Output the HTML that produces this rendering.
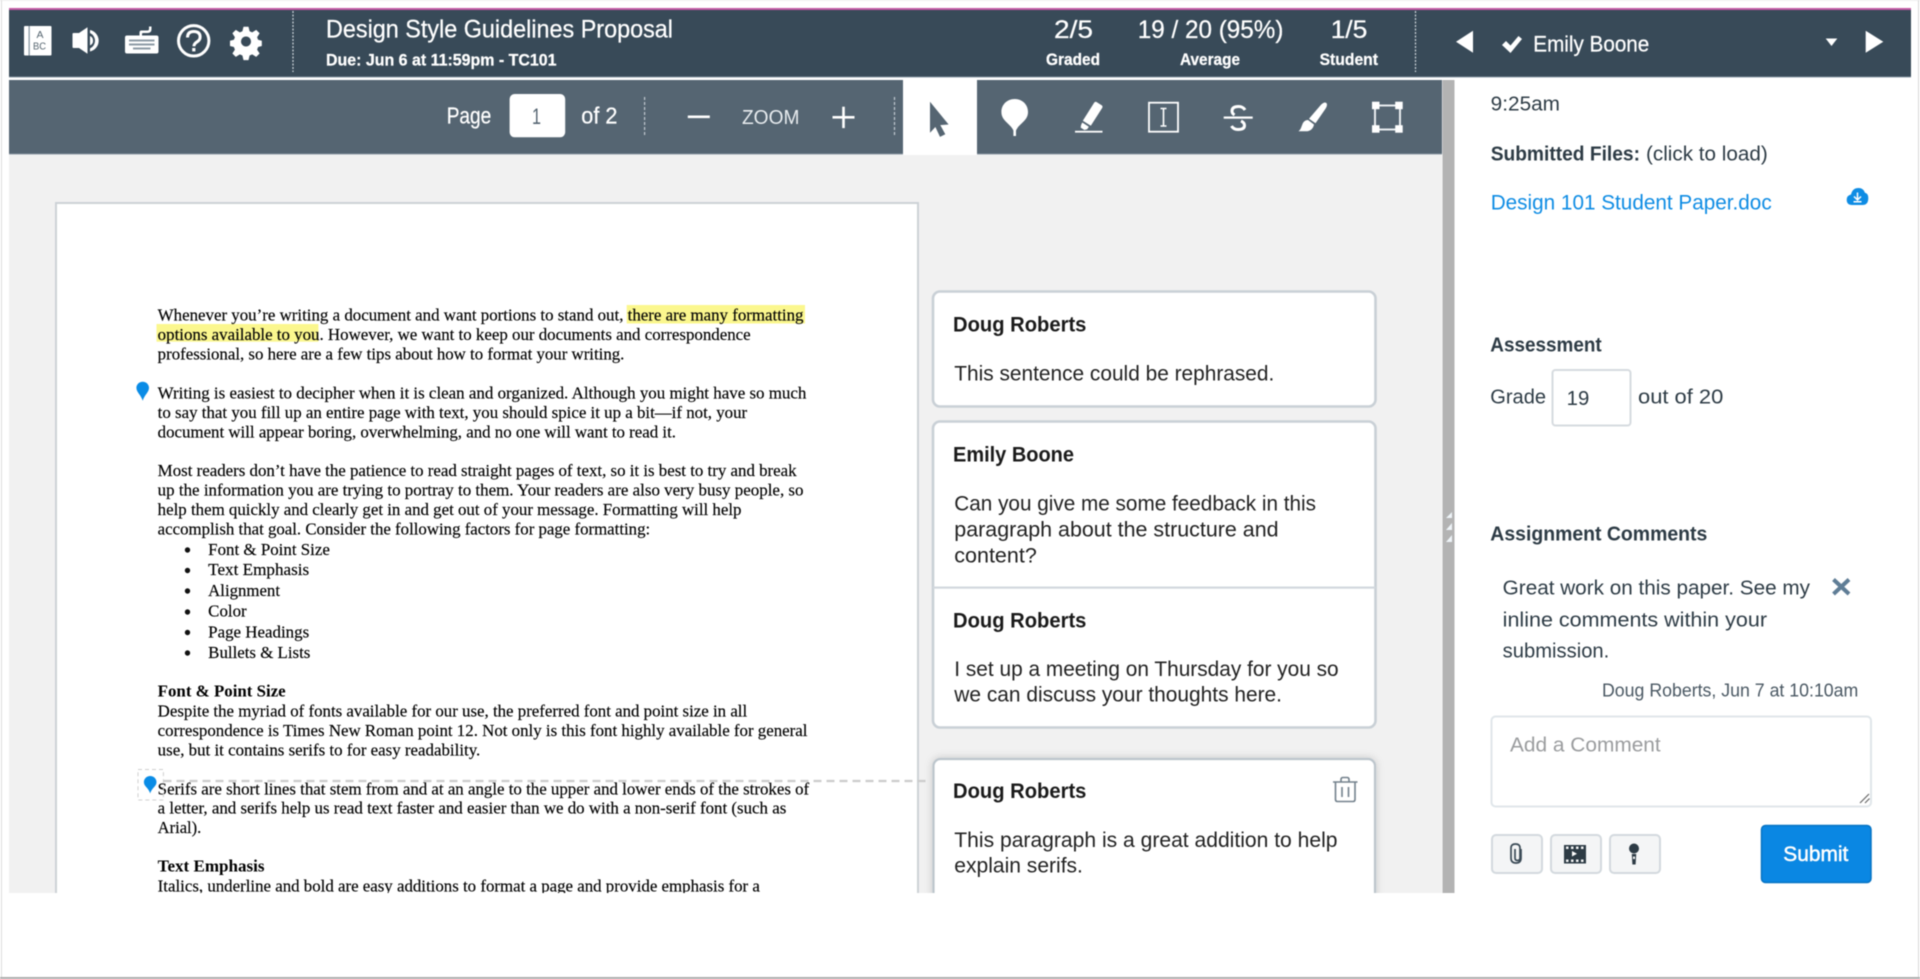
<!DOCTYPE html>
<html lang="en"><head><meta charset="utf-8"><title>SpeedGrader</title>
<style>
html,body{margin:0;padding:0;background:#fff;width:1920px;height:979px;overflow:hidden}
svg{display:block;position:absolute;left:0;top:0;filter:blur(.4px)}
text{font-family:"Liberation Sans",sans-serif;white-space:pre}
.w{fill:#fff;stroke:#fff;stroke-width:.25px}
.d{font-family:"Liberation Serif",serif;font-size:16.5px;fill:#000;stroke:#000;stroke-width:.15px}
.db{font-family:"Liberation Serif",serif;font-size:16.5px;fill:#000;font-weight:bold}
.cn{font-size:21px;fill:#1a1a1a;font-weight:bold}
.c{font-size:21px;fill:#222}
.s{font-size:20px;fill:#2d3b45}
.sb{font-size:20px;fill:#2d3b45;font-weight:bold}
</style></head><body>
<svg width="1920" height="979" viewBox="0 0 1920 979" xmlns="http://www.w3.org/2000/svg">
<!-- frame -->
<rect width="1920" height="979" fill="#fff"/>
<rect x="0" y="0" width="1920" height="1" fill="#eee"/>
<rect x="1" y="0" width="1" height="979" fill="#ddd"/>
<rect x="1918" y="0" width="1" height="979" fill="#d8d8d8"/>
<rect x="0" y="977" width="1920" height="2" fill="#adadad"/>

<!-- main bg -->
<rect x="9" y="154" width="1433" height="739" fill="#f1f1f1"/>
<rect x="1442.5" y="80" width="12" height="813" fill="#b3b3b3"/>
<path d="M1446 518l6-6v6zM1446 530l6-7v7zM1446 542l6-7v7z" fill="#eef4f8"/>

<!-- header -->
<rect x="9" y="8" width="1902" height="2.4" fill="#c45aa6"/>
<rect x="9" y="10" width="1902" height="67" fill="#384a58"/>
<rect x="9" y="76.5" width="1902" height="1" fill="#8796a2"/>
<path d="M293 11v61M1415.5 11v61" stroke="#cfd6db" stroke-width="1.2" stroke-dasharray="2 1.5"/>

<!-- header icons -->
<g fill="#fff">
<rect x="24" y="26" width="27.500" height="29.500" rx="1"/>
<rect x="28.500" y="26" width="1.300" height="29.500" fill="#8a98a4"/>
<path d="M73.500 33h5.500l8.500-5.700v26.500l-8.500-5.800h-5.500q-1 0-1-1v-13q0-1 1-1z"/>
<path d="M90 30a11 11 0 0 1 0 21.500v-3a8.500 8.500 0 0 0 0-15.500zM90 36a5.200 5.200 0 0 1 0 9.500z"/>
<path fill-rule="evenodd" d="M125 37.500q0-2 2-2h29.500q2 0 2 2v14q0 2-2 2H127q-2 0-2-2z"/>
<path d="M129 39.500h25.500v2h-25.500zM129 43.500h25.500v2h-25.500zM133 47.500h17.500v2h-17.500z" fill="#8d9ba6"/>
<path d="M139.500 35.500v-3q0-2 2-2h6q1.500 0 1.500-1.500v-2.500h2.500V29q0 4-4 4h-4.500q-1 0-1 1v1.500z"/>
<path fill-rule="evenodd" d="M243.500 26.700h5l1.100 4.600 2.600 1.100 4-2.500 3.400 3.400-2.500 3.900 1 2.600 3.700 1v5.200l-3.700 1-1 2.600 2.500 3.900-3.400 3.400-4-2.500-2.600 1.100-1.100 4.600h-5l-1.100-4.600-2.600-1.100-4 2.500-3.400-3.400 2.500-3.900-1-2.600-3.900-1v-5.200l3.900-1 1-2.600-2.500-3.900 3.400-3.400 4 2.500 2.600-1.100zM246 36.500a5 5 0 1 0 .01 0z"/>
</g>
<circle cx="193.700" cy="40.800" r="15.200" fill="none" stroke="#fff" stroke-width="3"/>
<path d="M187.500 37.500q0-6 6.300-6t6.300 5.500q0 3-3 4.800t-3.200 4.500" fill="none" stroke="#fff" stroke-width="3"/>
<rect x="192.200" y="48" width="3.200" height="3.400" fill="#fff"/>
<text x="36.500" y="38" font-size="10" fill="#55646f" textLength="7" lengthAdjust="spacingAndGlyphs">A</text>
<text x="33" y="49.500" font-size="10.500" fill="#55646f" textLength="13" lengthAdjust="spacingAndGlyphs">BC</text>

<!-- header text -->
<text class="w" x="326" y="37.500" font-size="25" textLength="347" lengthAdjust="spacingAndGlyphs">Design Style Guidelines Proposal</text>
<text class="w" x="326" y="65.500" font-size="16.500" font-weight="bold" textLength="230.500" lengthAdjust="spacingAndGlyphs">Due: Jun 6 at 11:59pm - TC101</text>
<text class="w" x="1054" y="38" font-size="25" textLength="39" lengthAdjust="spacingAndGlyphs">2/5</text>
<text class="w" x="1046" y="65" font-size="16.500" font-weight="bold" textLength="54" lengthAdjust="spacingAndGlyphs">Graded</text>
<text class="w" x="1137.800" y="38" font-size="25" textLength="145.600" lengthAdjust="spacingAndGlyphs">19 / 20 (95%)</text>
<text class="w" x="1180" y="65" font-size="16.500" font-weight="bold" textLength="60" lengthAdjust="spacingAndGlyphs">Average</text>
<text class="w" x="1330.600" y="38" font-size="25" textLength="36.800" lengthAdjust="spacingAndGlyphs">1/5</text>
<text class="w" x="1319.600" y="65" font-size="16.500" font-weight="bold" textLength="58.400" lengthAdjust="spacingAndGlyphs">Student</text>

<path d="M1473 30.700v22l-17-11z" fill="#fff"/>
<path d="M1502 45l4-4 4.500 4.500 8-9.500 3.500 3-11.500 14z" fill="#fff"/>
<text class="w" x="1533.300" y="51.700" font-size="22" textLength="116" lengthAdjust="spacingAndGlyphs">Emily Boone</text>
<path d="M1825.700 38.500h11.600l-5.800 7.500z" fill="#fff"/>
<path d="M1865.700 30.700v22l17.600-11z" fill="#fff"/>

<!-- toolbar -->
<rect x="9" y="80" width="1433" height="74" fill="#556572"/>
<rect x="9" y="153.500" width="1433" height="1" fill="#8b98a3"/>
<text class="w" x="446.700" y="123.300" font-size="23" textLength="44.600" lengthAdjust="spacingAndGlyphs">Page</text>
<rect x="509.600" y="94" width="55.600" height="43.300" rx="5" fill="#fff"/>
<text x="532" y="124" font-size="22" fill="#556572" textLength="9" lengthAdjust="spacingAndGlyphs">1</text>
<text class="w" x="581.300" y="123.300" font-size="23" textLength="36.200" lengthAdjust="spacingAndGlyphs">of 2</text>
<path d="M644.600 97v40M894.500 97v40" stroke="#c3cbd1" stroke-width="1.200" stroke-dasharray="3 2"/>
<rect x="687.800" y="115.500" width="22" height="2.600" fill="#fff"/>
<text x="742" y="124" font-size="20" fill="#e8ecef" textLength="57.400" lengthAdjust="spacingAndGlyphs">ZOOM</text>
<rect x="832.500" y="116" width="22" height="2.600" fill="#fff"/>
<rect x="842.200" y="106.700" width="2.600" height="21.400" fill="#fff"/>

<rect x="903" y="80" width="74" height="75" fill="#fff"/>
<path d="M930 101.700l18.600 22.800-8.300 .6 5 9.200-5.300 2.600-4.600-9.900-5.400 5.700z" fill="#556572"/>

<!-- pin tool -->
<path d="M1014.700 99c7.800 0 13.300 5.800 13.300 13 0 9-9 11.500-12 18.500v5.500h-2.600v-5.500c-3-7-12-9.500-12-18.500 0-7.200 5.500-13 13.300-13z" fill="#fff"/>
<!-- highlighter -->
<path d="M1096.500 102l5.500 3.500q1 1 .3 2.300l-11.500 18-8-5 11.500-18.300q1-1.200 2.200-.5z" fill="#fff"/>
<path d="M1082.300 122.500l6.500 4.200-1.600 2.500-2.800 .8-3.700-2.400 .4-2.600z" fill="#fff"/>
<rect x="1075" y="130.800" width="27.500" height="1.800" fill="#fff"/>
<!-- text box -->
<rect x="1149" y="102.700" width="29" height="29" fill="none" stroke="#fff" stroke-width="1.800"/>
<path d="M1160.500 108.500h6M1160.500 126h6M1163.500 108.500v17.500" stroke="#fff" stroke-width="1.600" fill="none"/>
<!-- strike -->
<rect x="1223.700" y="116.500" width="29" height="2.200" fill="#fff"/>
<path d="M1245 110q-2-3.500-6.500-3.500-6.500 0-6.500 4.500 0 2.500 2.500 4M1241 121q3.500 1.500 3.500 4.500 0 4-6.500 4-4.500 0-6.500-3.500" fill="none" stroke="#fff" stroke-width="3"/>
<!-- brush -->
<path d="M1326 102.800c1.500 1 1.200 3-.5 6l-10 14.500-6.500-4.500 12-14c2.300-2.300 3.800-2.800 5-2zM1308 120l6 4.500c-.8 4-3.500 6.800-8 6.800h-7.500c2.500-2 2.800-4.500 4-7.300 1-2.500 3-4 5.500-4z" fill="#fff"/>
<!-- crop -->
<rect x="1375" y="105.500" width="25" height="24" fill="none" stroke="#e8ecef" stroke-width="2"/>
<rect x="1372" y="101.700" width="7.500" height="7.500" fill="#fff"/><rect x="1395.200" y="101.700" width="7.500" height="7.500" fill="#fff"/>
<rect x="1372" y="125.200" width="7.500" height="7.500" fill="#fff"/><rect x="1395.200" y="125.200" width="7.500" height="7.500" fill="#fff"/>

<!-- document page -->
<rect x="56" y="203" width="862" height="700" fill="#fff" stroke="#cdd2d6" stroke-width="2"/>
<rect x="626.700" y="305" width="178.300" height="18.500" fill="#fbf78e"/>
<rect x="156.500" y="324" width="161.900" height="17.700" fill="#fbf78e"/>

<g class="doc">
<text class="d" x="157.700" y="320.500" textLength="645.800" lengthAdjust="spacingAndGlyphs">Whenever you’re writing a document and want portions to stand out, there are many formatting</text>
<text class="d" x="157.700" y="340" textLength="593" lengthAdjust="spacingAndGlyphs">options available to you. However, we want to keep our documents and correspondence</text>
<text class="d" x="157.700" y="359.500" textLength="466.700" lengthAdjust="spacingAndGlyphs">professional, so here are a few tips about how to format your writing.</text>
<text class="d" x="157.700" y="398.300" textLength="648.700" lengthAdjust="spacingAndGlyphs">Writing is easiest to decipher when it is clean and organized. Although you might have so much</text>
<text class="d" x="157.700" y="418" textLength="589.500" lengthAdjust="spacingAndGlyphs">to say that you fill up an entire page with text, you should spice it up a bit—if not, your</text>
<text class="d" x="157.700" y="437.700" textLength="518.300" lengthAdjust="spacingAndGlyphs">document will appear boring, overwhelming, and no one will want to read it.</text>
<text class="d" x="157.700" y="476" textLength="638.900" lengthAdjust="spacingAndGlyphs">Most readers don’t have the patience to read straight pages of text, so it is best to try and break</text>
<text class="d" x="157.700" y="495.700" textLength="645.800" lengthAdjust="spacingAndGlyphs">up the information you are trying to portray to them. Your readers are also very busy people, so</text>
<text class="d" x="157.700" y="515" textLength="583.800" lengthAdjust="spacingAndGlyphs">help them quickly and clearly get in and get out of your message. Formatting will help</text>
<text class="d" x="157.700" y="534.300" textLength="492.500" lengthAdjust="spacingAndGlyphs">accomplish that goal. Consider the following factors for page formatting:</text>
<g fill="#111">
<circle cx="187.500" cy="550" r="2.700"/><circle cx="187.500" cy="570.500" r="2.700"/><circle cx="187.500" cy="591" r="2.700"/><circle cx="187.500" cy="612" r="2.700"/><circle cx="187.500" cy="632.500" r="2.700"/><circle cx="187.500" cy="653" r="2.700"/>
</g>
<text class="d" x="208.200" y="554.800" textLength="121.700" lengthAdjust="spacingAndGlyphs">Font &amp; Point Size</text>
<text class="d" x="208.200" y="575" textLength="101" lengthAdjust="spacingAndGlyphs">Text Emphasis</text>
<text class="d" x="208.200" y="596.200" textLength="71.800" lengthAdjust="spacingAndGlyphs">Alignment</text>
<text class="d" x="208.200" y="616.700" textLength="38.500" lengthAdjust="spacingAndGlyphs">Color</text>
<text class="d" x="208.200" y="637.700" textLength="101" lengthAdjust="spacingAndGlyphs">Page Headings</text>
<text class="d" x="208.200" y="658" textLength="102.200" lengthAdjust="spacingAndGlyphs">Bullets &amp; Lists</text>
<text class="db" x="157.700" y="696.700" textLength="128" lengthAdjust="spacingAndGlyphs">Font &amp; Point Size</text>
<text class="d" x="157.700" y="716.700" textLength="589.500" lengthAdjust="spacingAndGlyphs">Despite the myriad of fonts available for our use, the preferred font and point size in all</text>
<text class="d" x="157.700" y="736" textLength="649.800" lengthAdjust="spacingAndGlyphs">correspondence is Times New Roman point 12. Not only is this font highly available for general</text>
<text class="d" x="157.700" y="755.700" textLength="322.600" lengthAdjust="spacingAndGlyphs">use, but it contains serifs to for easy readability.</text>
<text class="d" x="157.700" y="794.300" textLength="651.500" lengthAdjust="spacingAndGlyphs">Serifs are short lines that stem from and at an angle to the upper and lower ends of the strokes of</text>
<text class="d" x="157.700" y="813.700" textLength="628.600" lengthAdjust="spacingAndGlyphs">a letter, and serifs help us read text faster and easier than we do with a non-serif font (such as</text>
<text class="d" x="157.700" y="832.900" textLength="43.600" lengthAdjust="spacingAndGlyphs">Arial).</text>
<text class="db" x="157.700" y="871.700" textLength="106.800" lengthAdjust="spacingAndGlyphs">Text Emphasis</text>
<text class="d" x="157.700" y="891.300" textLength="602.200" lengthAdjust="spacingAndGlyphs">Italics, underline and bold are easy additions to format a page and provide emphasis for a</text>
</g>

<!-- pins & connector -->
<path d="M142.700 381.700c3.500 0 6.300 2.800 6.300 6 0 4.500-4.500 7-6.300 13-1.800-6-6.300-8.500-6.300-13 0-3.200 2.800-6 6.300-6z" fill="#0a8ce6"/>
<rect x="138" y="769.500" width="25.400" height="30.500" fill="none" stroke="#cfcfcf" stroke-width="1" stroke-dasharray="4 3"/>
<path d="M163.500 781H926" stroke="#cccccc" stroke-width="2.200" stroke-dasharray="8 5"/>
<path d="M150.200 776c3.500 0 6.300 2.800 6.300 6 0 4.500-4.500 5.500-6.300 11.500-1.800-6-6.300-7-6.300-11.500 0-3.200 2.800-6 6.300-6z" fill="#0a8ce6"/>

<!-- comment cards -->
<rect x="933" y="291.500" width="442.500" height="115" rx="7" fill="#fff" stroke="#c9d0d6" stroke-width="2.600"/>
<text class="cn" x="953" y="331.700" textLength="133.400" lengthAdjust="spacingAndGlyphs">Doug Roberts</text>
<text class="c" x="954.300" y="380.700" textLength="320" lengthAdjust="spacingAndGlyphs">This sentence could be rephrased.</text>

<rect x="933" y="421.500" width="442.500" height="306" rx="7" fill="#fff" stroke="#c9d0d6" stroke-width="2.600"/>
<rect x="933" y="586.500" width="442.500" height="2.200" fill="#d2d8dd"/>
<text class="cn" x="953" y="461.300" textLength="121" lengthAdjust="spacingAndGlyphs">Emily Boone</text>
<text class="c" x="954.300" y="510.300" textLength="361.700" lengthAdjust="spacingAndGlyphs">Can you give me some feedback in this</text>
<text class="c" x="954.300" y="536.300" textLength="324.300" lengthAdjust="spacingAndGlyphs">paragraph about the structure and</text>
<text class="c" x="954.300" y="562.300" textLength="82.500" lengthAdjust="spacingAndGlyphs">content?</text>
<text class="cn" x="953" y="627.300" textLength="133.400" lengthAdjust="spacingAndGlyphs">Doug Roberts</text>
<text class="c" x="954.300" y="675.800" textLength="384.300" lengthAdjust="spacingAndGlyphs">I set up a meeting on Thursday for you so</text>
<text class="c" x="954.300" y="701.500" textLength="327.700" lengthAdjust="spacingAndGlyphs">we can discuss your thoughts here.</text>

<defs><filter id="sh" x="-5%" y="-5%" width="110%" height="110%"><feDropShadow dx="0" dy="0" stdDeviation="4" flood-color="#000" flood-opacity=".18"/></filter>
<clipPath id="cl"><rect x="9" y="154" width="1433" height="739"/></clipPath></defs>
<g clip-path="url(#cl)">
<rect x="933.500" y="759" width="441.500" height="200" rx="7" fill="#fff" stroke="#bcc5cc" stroke-width="2.200" filter="url(#sh)"/>
</g>
<text class="cn" x="953" y="798" textLength="133.400" lengthAdjust="spacingAndGlyphs">Doug Roberts</text>
<text class="c" x="954.300" y="846.900" textLength="383.200" lengthAdjust="spacingAndGlyphs">This paragraph is a great addition to help</text>
<text class="c" x="954.300" y="872.500" textLength="128.600" lengthAdjust="spacingAndGlyphs">explain serifs.</text>
<!-- trash -->
<path d="M1333 782h24.500M1341 782v-2.500q0-2 2-2h4q2 0 2 2v2.500M1335.500 782.500v17q0 2 2 2h15.500q2 0 2-2v-17M1342 787v10M1348.500 787v10" fill="none" stroke="#73818c" stroke-width="1.600"/>

<!-- white mask below content -->
<rect x="9" y="893" width="1446" height="84" fill="#fff"/>

<!-- sidebar -->
<text class="s" x="1490.700" y="110.500" textLength="69.300" lengthAdjust="spacingAndGlyphs">9:25am</text>
<text class="sb" x="1490.700" y="160.700" textLength="149.300" lengthAdjust="spacingAndGlyphs">Submitted Files:</text>
<text class="s" x="1646" y="160.700" textLength="121.700" lengthAdjust="spacingAndGlyphs">(click to load)</text>
<text x="1490.700" y="209.300" font-size="21.500" fill="#0e8ce4" textLength="281" lengthAdjust="spacingAndGlyphs">Design 101 Student Paper.doc</text>
<path d="M1852 205q-5.300 0-5.300-5.200 0-4.300 4.300-5.300 1.500-6.500 7.500-6.500 5 0 6.500 4.800 3.300 .8 3.300 5.200 0 7-5.800 7z" fill="#0e8ce4"/>
<path d="M1857.500 192.500v7M1854 196.500l3.500 3.500 3.500-3.500M1853.500 201.800h8" stroke="#fff" stroke-width="1.500" fill="none"/>

<text class="sb" x="1490.300" y="351.300" textLength="111.400" lengthAdjust="spacingAndGlyphs">Assessment</text>
<text class="s" x="1490.300" y="403.300" textLength="55.700" lengthAdjust="spacingAndGlyphs">Grade</text>
<rect x="1552.500" y="370" width="78" height="55.500" rx="3" fill="#fff" stroke="#d6dbdf" stroke-width="2"/>
<text class="s" x="1566.700" y="405" font-size="21" textLength="22.600" lengthAdjust="spacingAndGlyphs">19</text>
<text class="s" x="1638" y="403.300" textLength="85.300" lengthAdjust="spacingAndGlyphs">out of 20</text>

<text class="sb" x="1490.300" y="540.700" textLength="217" lengthAdjust="spacingAndGlyphs">Assignment Comments</text>
<text class="s" x="1502.700" y="594.300" textLength="307.300" lengthAdjust="spacingAndGlyphs">Great work on this paper. See my</text>
<text class="s" x="1502.700" y="626.300" textLength="264.300" lengthAdjust="spacingAndGlyphs">inline comments within your</text>
<text class="s" x="1502.700" y="657.600" textLength="106.600" lengthAdjust="spacingAndGlyphs">submission.</text>
<path d="M1833.500 579.500l15.500 14.500M1849 579.500l-15.500 14.500" stroke="#5f7d96" stroke-width="4"/>
<text x="1602" y="696.500" font-size="18" fill="#4a5863" textLength="256.300" lengthAdjust="spacingAndGlyphs">Doug Roberts, Jun 7 at 10:10am</text>

<rect x="1491.500" y="716.500" width="379.500" height="90" rx="4" fill="#fff" stroke="#e0e6ea" stroke-width="2"/>
<text x="1510" y="751.500" font-size="20.500" fill="#9a9c9e" textLength="150.700" lengthAdjust="spacingAndGlyphs">Add a Comment</text>
<path d="M1860 803l9-9M1865 803l4.500-4.500" stroke="#666" stroke-width="1.200"/>

<g fill="#f4f5f6" stroke="#d3d9de" stroke-width="2">
<rect x="1492" y="835" width="50" height="38" rx="4"/>
<rect x="1551" y="835" width="50" height="38" rx="4"/>
<rect x="1610" y="835" width="50" height="38" rx="4"/>
</g>
<path d="M1521 849v9q0 5-5 5t-5-5v-10q0-4 4.500-4t4.500 4v10q0 2.500-2.500 2.500t-2.500-2.500v-9" fill="none" stroke="#3a4a56" stroke-width="1.700"/>
<path fill-rule="evenodd" d="M1564 845h22v18.500h-22zM1566 846.500v2.500h2.500v-2.500zM1571 846.500v2.500h2.500v-2.500zM1576 846.500v2.500h2.500v-2.500zM1581 846.500v2.500h2.500v-2.500zM1566 859.500v2.500h2.500v-2.500zM1571 859.500v2.500h2.500v-2.500zM1576 859.500v2.500h2.500v-2.500zM1581 859.500v2.500h2.500v-2.500z" fill="#2d3b45"/>
<path d="M1572 851v5.500l5-2.750z" fill="#fff"/>
<circle cx="1634" cy="848.500" r="5" fill="#2d3b45"/>
<path d="M1631.800 854h4.400l-.6 10.500h-3.200z" fill="#2d3b45"/>
<rect x="1633" y="856.500" width="2" height="2.500" fill="#f4f5f6"/>

<rect x="1761.500" y="825.500" width="109.500" height="57" rx="4" fill="#0a87e3" stroke="#0673c4" stroke-width="1.500"/>
<text x="1783.300" y="861" font-size="21.500" fill="#fff" stroke="#fff" stroke-width=".5" textLength="65" lengthAdjust="spacingAndGlyphs">Submit</text>
</svg>
</body></html>
